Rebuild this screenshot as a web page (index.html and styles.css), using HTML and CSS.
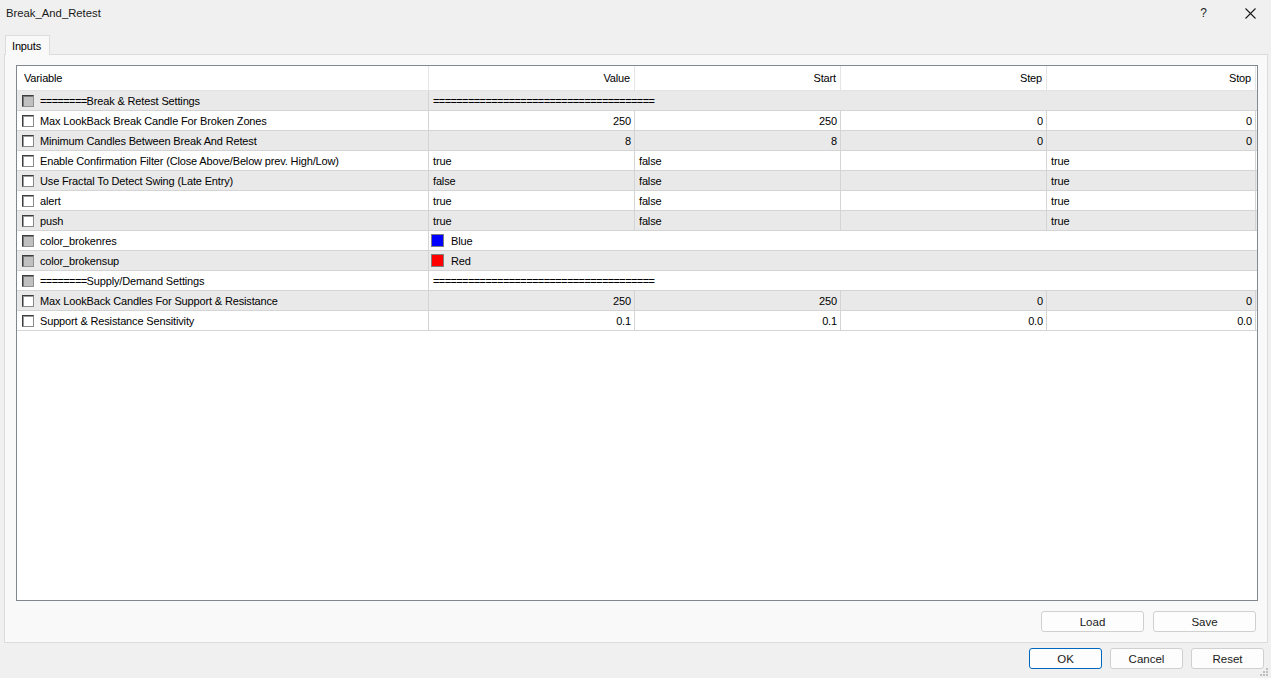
FILE: index.html
```html
<!DOCTYPE html>
<html>
<head>
<meta charset="utf-8">
<title>Break_And_Retest</title>
<link rel="stylesheet" href="styles.css">
</head>
<body>
<div class="window">
  <div class="titlebar">
    <span class="title">Break_And_Retest</span>
    <div class="tb-btns">
      <span class="help">?</span>
      <svg class="close" width="11" height="11" viewBox="0 0 11 11"><path d="M0.5 0.5 L10.5 10.5 M10.5 0.5 L0.5 10.5" stroke="#1a1a1a" stroke-width="1.1" fill="none"/></svg>
    </div>
  </div>
  <div class="tabs"><div class="tab">Inputs</div></div>
  <div class="panel">
    <div class="grid">
      <div class="row head">
        <div class="c var">Variable</div>
        <div class="c num">Value</div>
        <div class="c num">Start</div>
        <div class="c num">Step</div>
        <div class="c num">Stop</div>
      </div>
      <div class="row alt">
        <div class="c var"><span class="cb dis"></span><span><span class="eq">========</span>Break &amp; Retest Settings</span></div>
        <div class="c span"><span class="eq">======================================</span></div>
      </div>
      <div class="row">
        <div class="c var"><span class="cb"></span>Max LookBack Break Candle For Broken Zones</div>
        <div class="c num">250</div><div class="c num">250</div><div class="c num">0</div><div class="c num">0</div>
      </div>
      <div class="row alt">
        <div class="c var"><span class="cb"></span>Minimum Candles Between Break And Retest</div>
        <div class="c num">8</div><div class="c num">8</div><div class="c num">0</div><div class="c num">0</div>
      </div>
      <div class="row">
        <div class="c var"><span class="cb"></span>Enable Confirmation Filter (Close Above/Below prev. High/Low)</div>
        <div class="c">true</div><div class="c">false</div><div class="c"></div><div class="c">true</div>
      </div>
      <div class="row alt">
        <div class="c var"><span class="cb"></span>Use Fractal To Detect Swing (Late Entry)</div>
        <div class="c">false</div><div class="c">false</div><div class="c"></div><div class="c">true</div>
      </div>
      <div class="row">
        <div class="c var"><span class="cb"></span>alert</div>
        <div class="c">true</div><div class="c">false</div><div class="c"></div><div class="c">true</div>
      </div>
      <div class="row alt">
        <div class="c var"><span class="cb"></span>push</div>
        <div class="c">true</div><div class="c">false</div><div class="c"></div><div class="c">true</div>
      </div>
      <div class="row">
        <div class="c var"><span class="cb dis"></span>color_brokenres</div>
        <div class="c span color"><span class="sw blue"></span>Blue</div>
      </div>
      <div class="row alt">
        <div class="c var"><span class="cb dis"></span>color_brokensup</div>
        <div class="c span color"><span class="sw red"></span>Red</div>
      </div>
      <div class="row">
        <div class="c var"><span class="cb dis"></span><span><span class="eq">========</span>Supply/Demand Settings</span></div>
        <div class="c span"><span class="eq">======================================</span></div>
      </div>
      <div class="row alt">
        <div class="c var"><span class="cb"></span>Max LookBack Candles For Support &amp; Resistance</div>
        <div class="c num">250</div><div class="c num">250</div><div class="c num">0</div><div class="c num">0</div>
      </div>
      <div class="row">
        <div class="c var"><span class="cb"></span>Support &amp; Resistance Sensitivity</div>
        <div class="c num">0.1</div><div class="c num">0.1</div><div class="c num">0.0</div><div class="c num">0.0</div>
      </div>
    </div>
    <div class="panel-btns">
      <button class="btn wide">Load</button>
      <button class="btn wide">Save</button>
    </div>
  </div>
  <div class="footer">
    <button class="btn ok">OK</button>
    <button class="btn">Cancel</button>
    <button class="btn">Reset</button>
  </div>
  <svg class="grip" width="8" height="8" viewBox="0 0 8 8">
    <rect x="6" y="0" width="2" height="2" fill="#bdbdbd"/>
    <rect x="3" y="3" width="2" height="2" fill="#bdbdbd"/>
    <rect x="6" y="3" width="2" height="2" fill="#bdbdbd"/>
    <rect x="0" y="6" width="2" height="2" fill="#bdbdbd"/>
    <rect x="3" y="6" width="2" height="2" fill="#bdbdbd"/>
    <rect x="6" y="6" width="2" height="2" fill="#bdbdbd"/>
  </svg>
</div>
</body>
</html>
```

FILE: styles.css
```css
* { box-sizing: border-box; }
html, body { margin: 0; padding: 0; }
body {
  background: #f0f0f0;
  font-family: "Liberation Sans", Arial, sans-serif;
  color: #000;
}
.window {
  position: relative;
  width: 1271px;
  height: 678px;
  background: #f0f0f0;
  overflow: hidden;
}
.titlebar {
  height: 26px;
  display: flex;
  align-items: center;
  justify-content: space-between;
  padding-left: 6px;
}
.title {
  font-size: 11.3px;
  color: #1a1a1a;
}
.tb-btns {
  display: flex;
  align-items: center;
  height: 26px;
}
.help {
  font-size: 12px;
  color: #1a1a1a;
  margin-right: 38px;
}
.close { margin-right: 15px; display: block; }

.tabs {
  margin-top: 9px;
  margin-left: 5px;
  display: flex;
  position: relative;
  z-index: 1;
  margin-bottom: -1px;
}
.tab {
  height: 20px;
  width: 45px;
  background: #f9f9f9;
  border: 1px solid #dcdcdc;
  border-bottom: none;
  font-size: 11px;
  letter-spacing: -0.15px;
  padding-left: 6px;
  padding-top: 4px;
}
.panel {
  margin-left: 4px;
  width: 1264px;
  height: 589px;
  background: #f9f9f9;
  border: 1px solid #dcdcdc;
  padding: 10px 10px 10px 11px;
}
.grid {
  width: 1242px;
  height: 536px;
  background: #fff;
  border: 1px solid #828790;
  font-size: 11px;
  letter-spacing: -0.15px;
}
.row {
  display: grid;
  grid-template-columns: 412px 206px 206px 206px 209px;
  height: 20px;
  border-bottom: 1px solid #d4d4d4;
}
.row.alt { background: #e9e9e9; }
.row.head {
  height: 25px;
  border-bottom: 1px solid #e3e3e3;
  background: #fff;
}
.c {
  border-right: 1px solid #d4d4d4;
  display: flex;
  align-items: center;
  padding: 0 3px 0 4px;
  white-space: nowrap;
  overflow: hidden;
}
.head .c { border-right-color: #e5e5e5; padding-right: 4px; }
.head .c.var { padding-left: 7px; }
.c.num { justify-content: flex-end; }
.c.var { padding-left: 5px; }
.c.span { grid-column: 2 / -1; border-right: none; }
.c.color { padding-left: 2px; }
.eq { letter-spacing: -0.6px; }

.cb {
  width: 12px;
  height: 12px;
  flex: none;
  margin-right: 6px;
  background: #fff;
  border: 1px solid;
  border-color: #3c3c3c #8a8a8a #8a8a8a #3c3c3c;
  box-shadow: inset 1px 1px 0 #9a9a9a;
}
.cb.dis {
  background: #c0c0c0;
  border-color: #3c3c3c #909090 #909090 #3c3c3c;
  box-shadow: inset 1px 1px 0 #7a7a7a;
}
.sw {
  width: 13px;
  height: 13px;
  flex: none;
  border: 1px solid #7f7f7f;
  margin-right: 7px;
}
.sw.blue { background: #0000ff; }
.sw.red { background: #ff0000; }

.panel-btns {
  margin-top: 10px;
  display: flex;
  justify-content: flex-end;
  gap: 9px;
  padding-right: 1px;
}
.btn {
  height: 21px;
  width: 73px;
  background: #fdfdfd;
  border: 1px solid #d0d0d0;
  border-radius: 3px;
  font-family: "Liberation Sans", Arial, sans-serif;
  font-size: 11.5px;
  color: #1a1a1a;
  padding: 0;
  margin: 0;
}
.btn.wide { width: 103px; }
.btn.ok { border-color: #0067c0; }
.footer {
  display: flex;
  justify-content: flex-end;
  gap: 8px;
  padding-top: 5px;
  padding-right: 7px;
}
.grip {
  position: absolute;
  right: 3px;
  bottom: 2px;
}
```
